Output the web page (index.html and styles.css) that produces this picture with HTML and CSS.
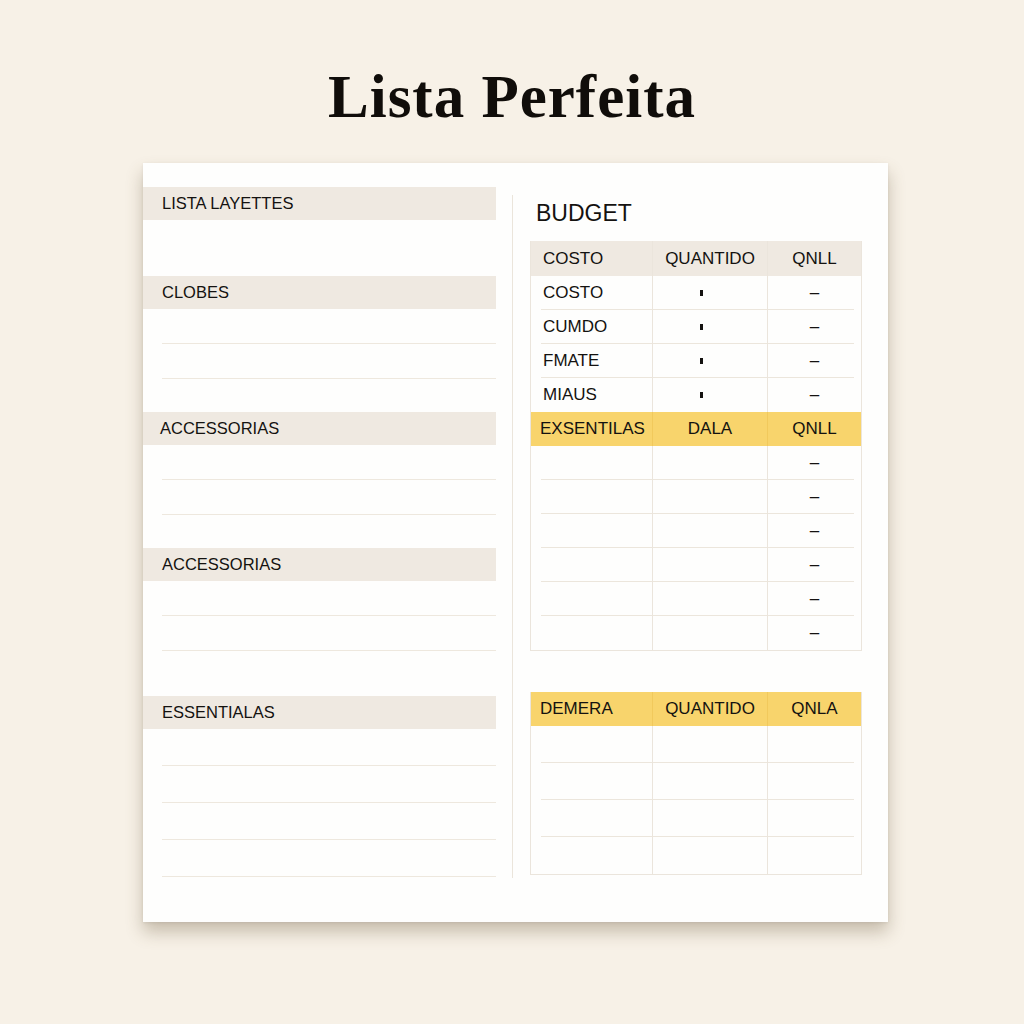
FILE: index.html
```html
<!DOCTYPE html>
<html lang="pt">
<head>
  <meta charset="UTF-8">
  <title>Lista Perfeita</title>
  <meta name="viewport" content="width=device-width, initial-scale=1.0">
  <link rel="stylesheet" href="styles.css">
</head>
<body>
  <h1 class="title">Lista Perfeita</h1>
  <div class="sheet">
    <div class="left">
      <div class="sec gap-56">
        <div class="sec-head">LISTA LAYETTES</div>
      </div>
      <div class="sec gap-35">
        <div class="sec-head">CLOBES</div>
        <div class="line"></div>
        <div class="line"></div>
      </div>
      <div class="sec gap-34">
        <div class="sec-head tight">ACCESSORIAS</div>
        <div class="line"></div>
        <div class="line"></div>
      </div>
      <div class="sec gap-45">
        <div class="sec-head">ACCESSORIAS</div>
        <div class="line"></div>
        <div class="line"></div>
      </div>
      <div class="sec">
        <div class="sec-head">ESSENTIALAS</div>
        <div class="line tall"></div>
        <div class="line tall"></div>
        <div class="line tall"></div>
        <div class="line tall"></div>
      </div>
    </div>
    <div class="divider"></div>
    <div class="right">
      <h2 class="budget">BUDGET</h2>
      <div class="tbl">
        <div class="row head grey"><div>COSTO</div><div>QUANTIDO</div><div>QNLL</div></div>
        <div class="row ruled"><div>COSTO</div><div><span class="tick"></span></div><div>–</div></div>
        <div class="row ruled"><div>CUMDO</div><div><span class="tick"></span></div><div>–</div></div>
        <div class="row ruled"><div>FMATE</div><div><span class="tick"></span></div><div>–</div></div>
        <div class="row"><div>MIAUS</div><div><span class="tick"></span></div><div>–</div></div>
        <div class="row head yellow"><div class="narrow">EXSENTILAS</div><div>DALA</div><div>QNLL</div></div>
        <div class="row ruled"><div></div><div></div><div>–</div></div>
        <div class="row ruled"><div></div><div></div><div>–</div></div>
        <div class="row ruled"><div></div><div></div><div>–</div></div>
        <div class="row ruled"><div></div><div></div><div>–</div></div>
        <div class="row ruled"><div></div><div></div><div>–</div></div>
        <div class="row"><div></div><div></div><div>–</div></div>
      </div>
      <div class="tbl second">
        <div class="row head yellow"><div class="narrow">DEMERA</div><div>QUANTIDO</div><div>QNLA</div></div>
        <div class="row ruled big"><div></div><div></div><div></div></div>
        <div class="row ruled big"><div></div><div></div><div></div></div>
        <div class="row ruled big"><div></div><div></div><div></div></div>
        <div class="row big"><div></div><div></div><div></div></div>
      </div>
    </div>
  </div>
</body>
</html>
```

FILE: styles.css
```css
body { margin:0; min-height:100vh; background:#f7f1e7; font-family:'Liberation Sans',Arial,sans-serif; color:#141210; }
.title { margin:0; padding-top:66px; text-align:center; font-family:'Liberation Serif','Times New Roman',serif; font-weight:bold; font-size:61px; line-height:61px; letter-spacing:1px; color:#100d0a; }
.sheet { display:flex; width:745px; height:759px; margin:36px 0 0 143px; padding:24px 26px 0 0; box-sizing:border-box; background:#fefefd; box-shadow:0 10px 16px rgba(100,80,50,0.32), 0 1px 3px rgba(0,0,0,0.08); }

.left { width:353px; flex:none; }
.sec-head { height:33px; line-height:33px; padding-left:19px; background:#efe9e1; font-size:16.5px; }
.sec-head.tight { padding-left:17px; }
.line { height:34px; margin-left:19px; border-bottom:1px solid #eee8de; }
.line.tall { height:36px; }
.gap-56 { margin-bottom:56px; }
.gap-35 { margin-bottom:33px; }
.gap-34 { margin-bottom:33px; }
.gap-45 { margin-bottom:45px; }

.divider { width:1px; height:683px; margin:8px 17px 0 16px; background:#ebe5db; flex:none; }

.right { flex:1; }
.budget { margin:12px 0 14px 6px; font-weight:normal; font-size:23px; line-height:28px; }
.tbl { border:1px solid #ebe5dc; border-top:none; }
.tbl.second { margin-top:41px; }
.row { display:grid; grid-template-columns:121px 115px 1fr; height:34px; font-size:17px; }
.row > div { display:flex; align-items:center; justify-content:center; }
.row > div:first-child { justify-content:flex-start; padding-left:12px; }
.row > div + div { border-left:1px solid #ebe5dc; }
.row.head { height:35px; }
.row.grey { background:#efe9e1; }
.row.yellow { background:#f8d46c; height:34px; }
.row.yellow > div + div { border-left-color:#f1c95c; }
.row > div.narrow { padding-left:9px; }
.row.ruled { background:linear-gradient(#ece6dc,#ece6dc) no-repeat 10px 100% / calc(100% - 17px) 1px; }
.row.big { height:37px; }
.tick { display:inline-block; width:3px; height:6px; background:#141210; margin-right:18px; }
```
